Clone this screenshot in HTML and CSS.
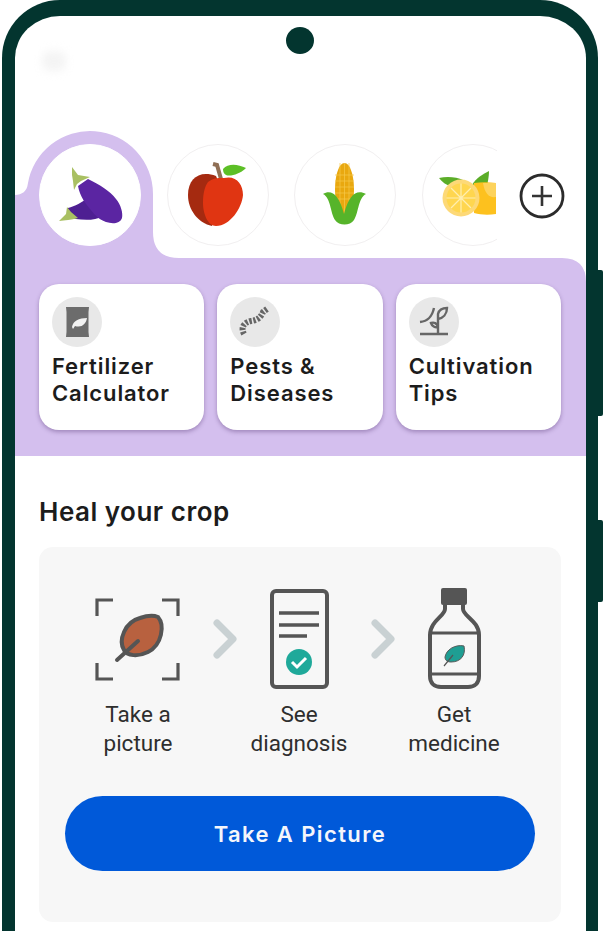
FILE: index.html
```html
<!DOCTYPE html>
<html lang="en">
<head>
<meta charset="utf-8">
<title>Heal your crop</title>
<link rel="stylesheet" href="styles.css">
</head>
<body>
<div class="phone">
  <span class="side-key side-key-a"></span>
  <span class="side-key side-key-b"></span>
  <div class="frame">
    <span class="camera"></span>
    <span class="status-blur"></span>
    <section class="band">
      <svg class="band-bg" viewBox="15 131 571 325" aria-hidden="true">
        <path fill="#d4bfee" d="M15 195 C22 195 27 191 27.8 184 A63 63 0 0 1 153 194 V232 Q153 258 179 258 H562 Q586 258 586 282 V456 H15 Z"/>
      </svg>
      <div class="crop-bar">
        <div class="crop-list">
          <div class="crop crop-active">
            <svg viewBox="39 144 102 102">
              <path fill="#4e1f92" d="M68 208 C75 206 82 203 88 197 L104 216 C94 221 84 220 76 219 C70 218 67 213 68 208Z"/>
              <path fill="#a9c062" d="M59 221 L66 214 L67 207 L71 212 L78 218 C71 220 65 220 59 221Z"/>
              <path fill="#5b25a2" d="M78 186 L88 179 C100 185 110 191 116 199 C121 205 123 213 122 218 C120 224 112 224 106 222 C98 219 94 214 90 209 C86 204 80 197 78 186Z"/>
              <path fill="#a9c062" d="M72 167 L78 175 L90 177 L81 181 L77 184 L74 190 L73 181 L72 175Z"/>
            </svg>
          </div>
          <div class="crop">
            <svg viewBox="166 144 102 102">
              <path fill="none" stroke="#8f6f55" stroke-width="4" d="M213 164 L217 165 L221 179"/>
              <path fill="#5cbf26" d="M223 169 C228 163 238 164 246 168 C240 174 230 177 226 175 C224 174 223 172 223 169Z"/>
              <path fill="#a52a10" d="M216 176 C200 170 188 178 188 195 C188 210 198 223 212 226 L222 190Z"/>
              <path fill="#e03512" d="M208 182 C214 177 220 178 224 178 C236 175 243 184 243 195 C242 208 230 226 216 226 C208 226 203 214 203 203 C203 193 205 186 208 182Z"/>
            </svg>
          </div>
          <div class="crop">
            <svg viewBox="294 144 102 102">
              <path fill="#e9a80f" d="M344.5 163 C350 163 354 175 354 190 C354 202 350 212 344.5 215 C339 212 335 202 335 190 C335 175 339 163 344.5 163Z"/>
              <path fill="none" stroke="#f6c94a" stroke-width=".7" d="M335 175 H354 M335 181 H354 M335 187 H354 M335 193 H354 M337 199 H352 M340 163 V210 M344.5 163 V214 M349 163 V210"/>
              <path fill="#56b42a" d="M323 194 C331 189 339 194 344 214 C349 194 357 189 366 194 C358 198 359 212 354 220 C350 226 339 226 335 220 C330 212 331 198 323 194Z"/>
            </svg>
          </div>
          <div class="crop">
            <svg viewBox="422 144 102 102">
              <path fill="#5bad28" d="M440 178 C448 176 458 177 464 180 L452 186 C447 185 443 182 440 178Z"/>
              <path fill="#5bad28" d="M490 171 C484 174 477 178 473 185 L488 186 C489 181 490 176 490 171Z"/>
              <path fill="#fdc11e" d="M475 183 C482 182 490 182 497 183 V214 C490 215 482 215 475 213Z"/>
              <path fill="#fdd35c" d="M484 183 H497 V197 C490 198 486 194 484 183Z"/>
              <circle cx="462" cy="198" r="18.5" fill="#fdd978"/>
              <circle cx="462" cy="198" r="14.5" fill="#ffd64f"/>
              <path stroke="#ffeeb0" stroke-width="1.2" d="M462 183.5 V212.5 M447.500 198 H476.500 M452 188 L472 208 M472 188 L452 208"/>
            </svg>
          </div>
        </div>
        <button class="add-crop" type="button" aria-label="Add crop">
          <svg viewBox="0 0 46 46">
            <circle cx="23" cy="23" r="21" fill="none" stroke="#2b2b2b" stroke-width="2.8"/>
            <path stroke="#333" stroke-width="2.6" d="M13 23 H33 M23 13 V33"/>
          </svg>
        </button>
      </div>
      <div class="tools">
        <article class="tool">
          <span class="tool-icon">
            <svg viewBox="52 297 50 50">
              <path fill="#6c6c6c" d="M66 307 H89 L88.500 312 V332 L89 337 H66 L66.500 332 V312Z"/>
              <path fill="#f2f2f2" d="M72 327 C73 321 79 318 87 318 C86 324 82 328 75 326 L73 329Z"/>
            </svg>
          </span>
          <h3 class="tool-name">Fertilizer<br>Calculator</h3>
        </article>
        <article class="tool">
          <span class="tool-icon">
            <svg viewBox="231 297 50 50">
              <path fill="none" stroke="#666" stroke-width="6" stroke-dasharray="2.500 1.500" d="M245 334 C241 327 246 322 252 321 C259 320 262 317 264 312 L268 309"/>
            </svg>
          </span>
          <h3 class="tool-name">Pests &amp;<br>Diseases</h3>
        </article>
        <article class="tool">
          <span class="tool-icon">
            <svg viewBox="409 297 50 50">
              <path fill="none" stroke="#666" stroke-width="2.400" d="M420 334 H448 M420 322 C428 321 432 317 434 308 M438 334 L438 314 C439 310 442 308 447 308 C447 314 443 318 438 319 M438 327 C435 328 432 326 431 323 C434 322 437 323 438 327"/>
            </svg>
          </span>
          <h3 class="tool-name">Cultivation<br>Tips</h3>
        </article>
      </div>
    </section>
    <section class="heal">
      <h2 class="heal-title">Heal your crop</h2>
      <div class="heal-card">
        <div class="steps">
          <div class="step">
            <svg class="step-art" viewBox="68 586 140 104">
              <path class="line" stroke-width="3.200" d="M113 600 H97 V616 M162 600 H178 V616 M97 663 V679 H113 M178 663 V679 H162"/>
              <path fill="#b8613f" stroke="#555" stroke-width="4" d="M158 617 C165 625 162 645 148 652 C138 657 127 656 124 650 C118 640 125 622 140 618 C146 616 153 615 158 617Z"/>
              <path class="line" stroke-width="4" stroke-linecap="round" d="M117 660 L138 641"/>
            </svg>
            <p class="step-label">Take a<br>picture</p>
          </div>
          <svg class="chevron" viewBox="208 586 34 104">
            <polyline class="chev-line" points="217,623 233,639 217,655"/>
          </svg>
          <div class="step">
            <svg class="step-art" viewBox="242 586 114 104">
              <rect class="line" stroke-width="4" x="272" y="591" width="55" height="96" rx="4"/>
              <path class="line" stroke-width="3.600" d="M279 613 H319 M279 625 H319 M279 636 H307"/>
              <circle cx="299" cy="662" r="13" fill="#1fa99a"/>
              <path fill="none" stroke="#fff" stroke-width="3" d="M292 662 L297 667 L306 658"/>
            </svg>
            <p class="step-label">See<br>diagnosis</p>
          </div>
          <svg class="chevron" viewBox="356 586 52 104">
            <polyline class="chev-line" points="375,623 391,639 375,655"/>
          </svg>
          <div class="step">
            <svg class="step-art" viewBox="408 586 92 104">
              <rect x="441" y="588" width="26" height="17" rx="2" fill="#555"/>
              <path class="line" stroke-width="4" d="M445 604 V609 C445 616 430 621 430 635 V676 C430 683 434 687 441 687 H468 C475 687 479 683 479 676 V635 C479 621 463 616 463 609 V604"/>
              <path class="line" stroke-width="3.200" d="M430 633 H479 M430 674 H479"/>
              <path fill="#1f9e93" stroke="#5a5a5a" stroke-width="1" d="M464 646 C466 655 461 662 451 662 C447 662 445 660 445 657 C446 650 455 644 464 646Z"/>
              <path class="line" stroke-width="1.200" d="M444 666 L453 655"/>
            </svg>
            <p class="step-label">Get<br>medicine</p>
          </div>
        </div>
        <button class="cta" type="button">Take A Picture</button>
      </div>
    </section>
  </div>
</div>
</body>
</html>
```

FILE: styles.css
```css
* { box-sizing: border-box; }

html, body {
  margin: 0;
  background: #fff;
}

.phone {
  position: relative;
  width: 603px;
  height: 931px;
  overflow: hidden;
  font-family: Inter, "Liberation Sans", sans-serif;
}

.side-key {
  position: absolute;
  left: 590px;
  width: 13px;
  background: #03352f;
  border-radius: 2px;
}

.side-key-a { top: 270px; height: 146px; }
.side-key-b { top: 520px; height: 82px; }

.frame {
  position: relative;
  margin-left: 2px;
  width: 596px;
  height: 931px;
  background: #fff;
  border-style: solid;
  border-color: #03352f;
  border-width: 16px 12px 0 13px;
  border-radius: 58px 58px 0 0;
  padding-top: 115px;
}

.camera {
  position: absolute;
  left: 271px;
  top: 11px;
  width: 28px;
  height: 27px;
  border-radius: 50%;
  background: #03352f;
}

.status-blur {
  position: absolute;
  left: 27px;
  top: 35px;
  width: 24px;
  height: 20px;
  border-radius: 8px;
  background: #f4f4f4;
  filter: blur(4px);
}

.band {
  position: relative;
  height: 325px;
  padding-top: 13px;
}

.band-bg {
  position: absolute;
  left: 0;
  top: 0;
  width: 571px;
  height: 325px;
  display: block;
}

.crop-bar {
  position: relative;
  display: flex;
  align-items: flex-start;
  padding-left: 24px;
}

.crop-list {
  display: flex;
  gap: 25.5px;
  width: 458px;
  overflow: hidden;
  flex: none;
}

.crop {
  flex: none;
  width: 102px;
  height: 102px;
  border-radius: 50%;
  background: #fff;
  border: 1.5px solid #f1eff0;
  position: relative;
}

.crop svg {
  position: absolute;
  left: -1.5px;
  top: -1.5px;
  width: 102px;
  height: 102px;
  display: block;
}

.crop-active { border-color: #fff; }

.add-crop {
  flex: none;
  width: 46px;
  height: 46px;
  margin: 29px 0 0 22px;
  padding: 0;
  border: 0;
  background: none;
}

.add-crop svg {
  display: block;
  width: 46px;
  height: 46px;
}

.tools {
  position: relative;
  display: flex;
  gap: 13px;
  margin: 38px 25px 0 24px;
}

.tool {
  flex: 1 1 0;
  height: 146px;
  padding: 13px 8px 0 13px;
  background: #fff;
  border-radius: 20px;
  box-shadow: 0 2px 4px rgba(80, 50, 110, 0.4);
}

.tool-icon {
  display: block;
  width: 50px;
  height: 50px;
  border-radius: 50%;
  background: #e8e8e8;
}

.tool-icon svg {
  display: block;
  width: 50px;
  height: 50px;
}

.tool-name {
  margin: 6px 0 0;
  font-size: 22px;
  line-height: 27px;
  font-weight: 600;
  letter-spacing: 0.9px;
  color: #1c1c1c;
  white-space: nowrap;
}

.heal {
  padding: 0 25px 0 24px;
}

.heal-title {
  margin: 41px 0 0;
  font-size: 26px;
  line-height: 30px;
  font-weight: 600;
  letter-spacing: 0.5px;
  color: #1c1c1c;
}

.heal-card {
  height: 375px;
  margin-top: 20px;
  padding-top: 39px;
  background: #f7f7f7;
  border-radius: 14px;
}

.steps {
  display: grid;
  grid-template-columns: 140px 34px 114px 52px 92px;
  padding-left: 29px;
  align-items: start;
}

.step-art {
  display: block;
  height: 104px;
  width: 100%;
}

.chevron {
  display: block;
  width: 100%;
  height: 104px;
}

.chev-line {
  fill: none;
  stroke: #c9d1d3;
  stroke-width: 7;
  stroke-linecap: round;
  stroke-linejoin: round;
}

.line {
  fill: none;
  stroke: #555;
}

.step-label {
  margin: 10px 0 0;
  text-align: center;
  font-family: Roboto, "Liberation Sans", sans-serif;
  font-size: 22.5px;
  line-height: 28.5px;
  color: #2e2e2e;
  white-space: nowrap;
}

.cta {
  display: block;
  width: 470px;
  height: 75px;
  margin: 39px 0 0 26px;
  border: 0;
  border-radius: 38px;
  background: #0059d9;
  color: #f4f6fb;
  font-family: Inter, "Liberation Sans", sans-serif;
  font-size: 22px;
  font-weight: 600;
  letter-spacing: 1.4px;
}
```
